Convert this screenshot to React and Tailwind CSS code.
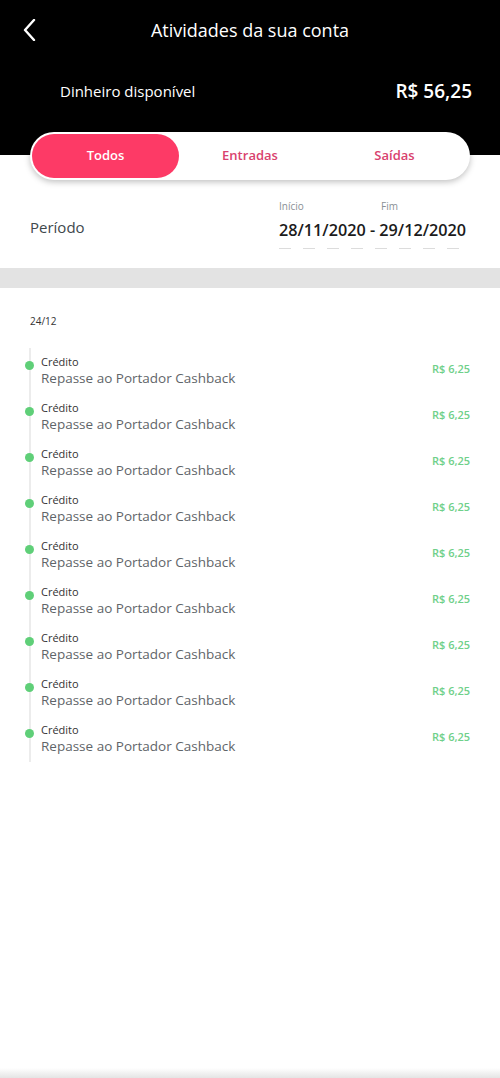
const items = Array.from({ length: 9 }, (_, i) => ({
    id: i,
    type: 'Crédito',
    desc: 'Repasse ao Portador Cashback',
    value: 'R$ 6,25',
}));

const Tabs = () => (
    <div className="flex h-[48px] items-center rounded-full bg-white shadow-[0_2px_6px_rgba(0,0,0,0.25)] p-[2px]">
        <div className="flex h-full w-[147px] items-center justify-center rounded-full bg-[#fd3a66] text-[13px] font-semibold text-white">
            Todos
        </div>
        <div className="flex flex-1 items-center justify-center text-[13px] font-semibold text-[#d9426e]">
            Entradas
        </div>
        <div className="flex w-[147px] items-center justify-center text-[13px] font-semibold text-[#d9426e]">
            Saídas
        </div>
    </div>
);

export default function App() {
    return (
        <div className="relative flex h-[1078px] w-[500px] flex-col bg-white font-['Open_Sans',sans-serif]">
            {/* cabeçalho preto */}
            <div className="h-[155px] bg-black px-[20px] pt-[14px]">
                <div className="relative flex h-[32px] items-center justify-center">
                    <svg className="absolute left-[2px] top-[5px]" width="14" height="22" viewBox="0 0 14 22" fill="none">
                        <polyline points="12,1 3,11 12,21" stroke="white" strokeWidth="2.4" strokeLinecap="round" strokeLinejoin="round" />
                    </svg>
                    <span className="text-[18px] font-medium text-white">Atividades da sua conta</span>
                </div>
                <div className="mt-[31px] flex items-center justify-between pl-[40px] pr-[8px]">
                    <span className="text-[15px] text-white">Dinheiro disponível</span>
                    <span className="text-[19px] font-semibold text-white">R$ 56,25</span>
                </div>
            </div>

            <div className="-mt-[23px] px-[30px]">
                <Tabs />
            </div>

            {/* período */}
            <div className="flex items-end justify-between pl-[30px] pr-[34px] pt-[19px]">
                <span className="mb-[11px] text-[15px] text-[#40484c]">Período</span>
                <div className="flex flex-col">
                    <div className="flex text-[10px] text-[#8a9095]">
                        <span className="w-[102px]">Início</span>
                        <span>Fim</span>
                    </div>
                    <span className="mt-[4px] text-[16.2px] font-semibold text-[#1b1b1b]">28/11/2020 - 29/12/2020</span>
                    <div className="mt-[6px] flex gap-[12px]">
                        {Array.from({ length: 8 }).map((_, i) => (
                            <span key={i} className="h-[1px] w-[12px] bg-[#dcdcdc]" />
                        ))}
                    </div>
                </div>
            </div>

            <div className="mt-[19px] h-[20px] bg-[#e3e3e3]" />

            <div className="px-[30px] pt-[26px]">
                <div className="text-[10px] text-[#333]">24/12</div>
                <div className="mt-[19px] flex flex-col">
                    {items.map((it) => (
                        <div key={it.id} className="relative flex items-start">
                            <span className="absolute left-[-1px] top-0 h-full w-[2px] bg-[#ececec]" />
                            <span className="absolute left-[-5px] top-[13px] h-[9px] w-[9px] rounded-full bg-[#5fcf78]" />
                            <div className="ml-[11px] flex flex-1 items-center justify-between py-[7px]">
                                <div className="flex flex-col">
                                    <span className="text-[11px] leading-[14px] text-[#333]">{it.type}</span>
                                    <span className="text-[13.5px] leading-[18px] text-[#5f6569]">{it.desc}</span>
                                </div>
                                <span className="mb-[4px] text-[11px] font-semibold text-[#6fd08a]">{it.value}</span>
                            </div>
                        </div>
                    ))}
                </div>
            </div>

            <div className="absolute bottom-0 left-0 h-[10px] w-full bg-gradient-to-b from-white to-[#e4e4e4]" />
        </div>
    );
}
